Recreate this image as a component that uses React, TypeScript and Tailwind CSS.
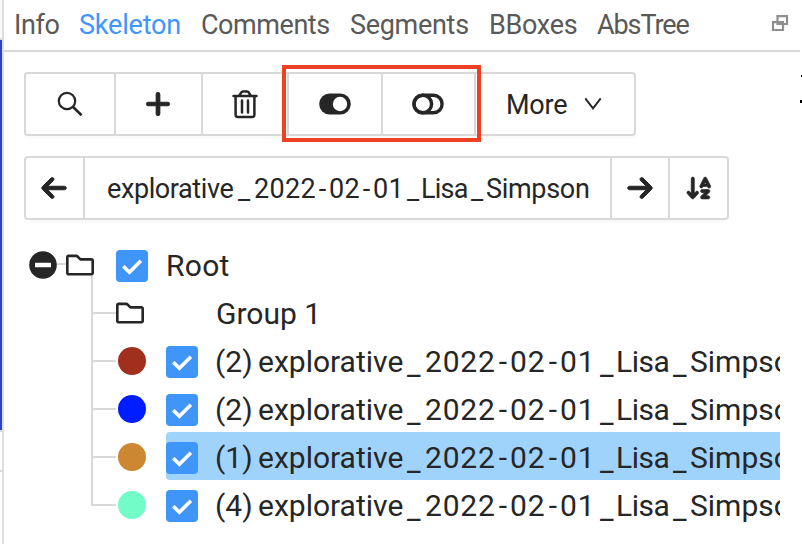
import React from "react";
import { FaPlus, FaArrowLeft, FaArrowRight, FaArrowDownAZ } from "react-icons/fa6";
import { FaRegFolder } from "react-icons/fa";

const tabs = [
  { name: "Info", box: "w-[65px] tracking-[-0.4px] text-[#595959]" },
  { name: "Skeleton", box: "w-[122px] tracking-[-0.2px] text-[#4096ff]" },
  { name: "Comments", box: "w-[149px] tracking-[-0.45px] text-[#595959]" },
  { name: "Segments", box: "w-[139px] tracking-[-0.3px] text-[#595959]" },
  { name: "BBoxes", box: "w-[108px] tracking-[-0.3px] text-[#595959]" },
  { name: "AbsTree", box: "w-[100px] tracking-[-1.1px] text-[#595959]" },
];

const trees = [
  { count: 2, dot: "bg-[#a0301d]", active: false },
  { count: 2, dot: "bg-[#001dff]", active: false },
  { count: 1, dot: "bg-[#cb8731]", active: true },
  { count: 4, dot: "bg-[#72fdc8]", active: false },
];

function Checkbox() {
  return (
    <span className="flex size-8 shrink-0 rounded-[4px] bg-[#4096f8]">
      <svg viewBox="0 0 32 32" className="size-8">
        <path d="M7.3 16.3 L13.4 22.2 L24.9 10.7" fill="none" stroke="white" strokeWidth="3.6" />
      </svg>
    </span>
  );
}

function SearchIcon() {
  return (
    <svg viewBox="0 0 26 26" className="size-[26px]" fill="none" stroke="#262626" strokeWidth="2.2">
      <circle cx="10" cy="10" r="8.2" />
      <path d="M15.8 15.8 L24.6 24.2" strokeWidth="2.6" />
    </svg>
  );
}

function TrashIcon() {
  return (
    <svg viewBox="0 0 26 30" className="h-[30px] w-[26px]" fill="none" stroke="#262626" strokeWidth="2.5">
      <path d="M1.5 7 H24.5" strokeLinecap="round" />
      <path d="M7.5 6.5 L9.3 3.4 Q9.8 2.4 10.9 2.4 H15.1 Q16.2 2.4 16.7 3.4 L18.5 6.5" />
      <path d="M3.6 7 V25.8 Q3.6 28 5.8 28 H20.2 Q22.4 28 22.4 25.8 V7" />
      <path d="M10 11.5 V23.5 M16 11.5 V23.5" strokeLinecap="round" />
    </svg>
  );
}

function ToggleOn() {
  return (
    <svg viewBox="0 0 32 22" className="h-[22px] w-8">
      <rect x="0.2" y="0.5" width="31.6" height="21" rx="10.5" fill="#262626" />
      <circle cx="21" cy="11" r="7.2" fill="white" />
    </svg>
  );
}

function ToggleOff() {
  return (
    <svg viewBox="0 0 32 22" className="h-[22px] w-8" fill="none" stroke="#262626" strokeWidth="3.4">
      <rect x="1.9" y="2.2" width="28.2" height="17.6" rx="8.8" />
      <circle cx="10.8" cy="11" r="8.8" />
    </svg>
  );
}

function App() {
  return (
    <div className="flex h-[544px] w-[802px] overflow-hidden bg-white font-['Roboto','Noto_Sans',sans-serif] text-[#262626]">
      <div className="flex w-[2px] shrink-0 flex-col">
        <div className="h-[38px] bg-[#fafafa]" />
        <div className="h-[2px] bg-[#d9d9d9]" />
        <div className="h-[390px] bg-[#2d3fce]" />
        <div className="h-[2px] bg-[#d9d9d9]" />
        <div className="mt-[38px] h-[2px] bg-[#d9d9d9]" />
      </div>
      <div className="w-[2px] shrink-0 bg-[#dedede]" />

      <div className="flex w-[796px] shrink-0 flex-col">
        <nav className="flex h-[52px] shrink-0 border-b-2 border-[#d9d9d9] pl-[10px] text-[27px] leading-[51px]">
          {tabs.map((tab) => (
            <span key={tab.name} className={"shrink-0 whitespace-nowrap " + tab.box}>
              {tab.name}
            </span>
          ))}
          <svg viewBox="0 0 18 18" className="mt-[14px] ml-[74px] size-[18px]" fill="none" stroke="#8f8f8f" strokeWidth="2.2">
            <path d="M6.5 2.2 H16 V10 H6.5 Z" />
            <path d="M2 8.2 H12 V16 H2 Z" />
          </svg>
        </nav>

        <div className="relative mt-5 ml-5 flex h-16 w-[612px] shrink-0 rounded-[4px] border-2 border-[#d9d9d9] shadow-[0_3px_0_#fafafa]">
          <button className="flex w-[90px] items-center justify-center border-r-2 border-[#d9d9d9]">
            <SearchIcon />
          </button>
          <button className="flex w-[87px] items-center justify-center border-r-2 border-[#d9d9d9] pr-px">
            <FaPlus className="size-7" stroke="#262626" strokeWidth="22" />
          </button>
          <button className="flex w-[86px] items-center justify-center border-r-2 border-[#d9d9d9]">
            <TrashIcon />
          </button>
          <button className="flex w-[94px] items-center justify-center border-r-2 border-[#d9d9d9] pr-px">
            <ToggleOn />
          </button>
          <button className="flex w-[93px] items-center justify-center border-r-2 border-[#d9d9d9] pr-[2px]">
            <ToggleOff />
          </button>
          <button className="flex flex-1 items-center pl-[30px] text-[27px]">
            <span className="w-[78px] pt-[2px] text-left tracking-[-0.2px]">More</span>
            <svg viewBox="0 0 18 14" className="h-[14px] w-[18px]" fill="none" stroke="#262626" strokeWidth="1.9">
              <path d="M1.3 1.3 L9 11.4 L16.7 1.3" />
            </svg>
          </button>
          <div className="absolute -top-[9px] left-[256px] h-[77px] w-[199px] border-4 border-[#ee4023]" />
        </div>

        <div className="mt-5 ml-5 flex h-16 w-[705px] shrink-0 rounded-[4px] border-2 border-[#d9d9d9] shadow-[0_3px_0_#fafafa]">
          <button className="flex w-[59px] items-center justify-center border-r-2 border-[#d9d9d9] pr-px">
            <FaArrowLeft className="size-7" stroke="#262626" strokeWidth="18" />
          </button>
          <div className="flex w-[527px] items-center border-r-2 border-[#d9d9d9] pt-[2px] pl-[22px] text-[27px] whitespace-nowrap">
            <span className="w-[131px] tracking-[-0.4px]">explorative</span>
            <span className="w-[16px] pt-[3px]">_</span>
            <span className="w-[62px] tracking-[0.3px]">2022</span>
            <span className="w-[13px] text-center">-</span>
            <span className="w-[31px] tracking-[0.3px]">02</span>
            <span className="w-[13px] text-center">-</span>
            <span className="w-[34px] tracking-[0.3px]">01</span>
            <span className="w-[14px] pt-[3px]">_</span>
            <span className="w-[50px] tracking-[-0.8px]">Lisa</span>
            <span className="w-[15px] pt-[3px]">_</span>
            <span className="tracking-[-0.3px]">Simpson</span>
          </div>
          <button className="flex w-[58px] items-center justify-center border-r-2 border-[#d9d9d9]">
            <FaArrowRight className="size-7" stroke="#262626" strokeWidth="18" />
          </button>
          <button className="flex flex-1 items-center justify-center">
            <FaArrowDownAZ className="size-7" stroke="#262626" strokeWidth="14" />
          </button>
        </div>

        <div className="mt-5 flex w-[776px] shrink-0 flex-col text-[30px] leading-[48px] whitespace-nowrap">
          <div className="flex h-12 items-center pl-[25px]">
            <svg viewBox="0 0 28 28" className="mt-[2px] size-7">
              <circle cx="14" cy="14" r="13.8" fill="#262626" />
              <rect x="6" y="11.7" width="16" height="4.6" rx="0.6" fill="white" />
            </svg>
            <span className="h-[2px] w-[9px] bg-[#d9d9d9]" />
            <FaRegFolder className="mt-[2px] size-7" />
            <span className="mt-1 ml-[22px]">
              <Checkbox />
            </span>
            <span className="pt-[3px] pl-[18px] tracking-[0.3px]">Root</span>
          </div>
          <div className="-mt-[12px] ml-[87px] h-[12px] w-[2px] bg-[#d9d9d9]" />
          <div className="flex h-12 pl-[87px]">
            <span className="w-[2px] bg-[#d9d9d9]" />
            <span className="mt-6 h-[2px] w-[23px] bg-[#d9d9d9]" />
            <FaRegFolder className="mt-[11px] size-7" />
            <span className="pt-[2px] pl-[72px]">Group 1</span>
          </div>
          {trees.map((tree, i) => (
            <div key={i} className="flex h-12 pl-[87px]">
              <span className={"w-[2px] bg-[#d9d9d9] " + (i === 3 ? "h-[26px]" : "h-12")} />
              <span className="mt-6 h-[2px] w-[23px] bg-[#d9d9d9]" />
              <span className={"mt-[11px] ml-[2px] size-7 shrink-0 rounded-full " + tree.dot} />
              <div className={"ml-5 flex h-12 w-[614px] overflow-hidden rounded-l-[4px] " + (tree.active ? "bg-[#9fd3fc]" : "")}>
                <span className="mt-[10px]">
                  <Checkbox />
                </span>
                <span className="flex pt-[2px] pl-[17px]">
                  <span className="w-[43px]">({tree.count})</span>
                  <span className="w-[149px]">explorative</span>
                  <span className="w-[18px] pt-[3px]">_</span>
                  <span className="w-[71px] tracking-[0.8px]">2022</span>
                  <span className="w-[14px] text-center">-</span>
                  <span className="w-[36px] tracking-[0.8px]">02</span>
                  <span className="w-[14px] text-center">-</span>
                  <span className="w-[40px] tracking-[0.8px]">01</span>
                  <span className="w-4 pt-[3px]">_</span>
                  <span className="w-[57px] tracking-[-0.5px]">Lisa</span>
                  <span className="w-[17px] pt-[3px]">_</span>
                  <span>Simpson</span>
                </span>
              </div>
            </div>
          ))}
        </div>
      </div>

      <div className="flex w-[2px] shrink-0 flex-col items-end">
        <div className="mt-[75px] h-[2px] w-px bg-black" />
        <div className="mt-[23px] h-[3px] w-[2px] bg-black" />
      </div>
    </div>
  );
}

export default App;
